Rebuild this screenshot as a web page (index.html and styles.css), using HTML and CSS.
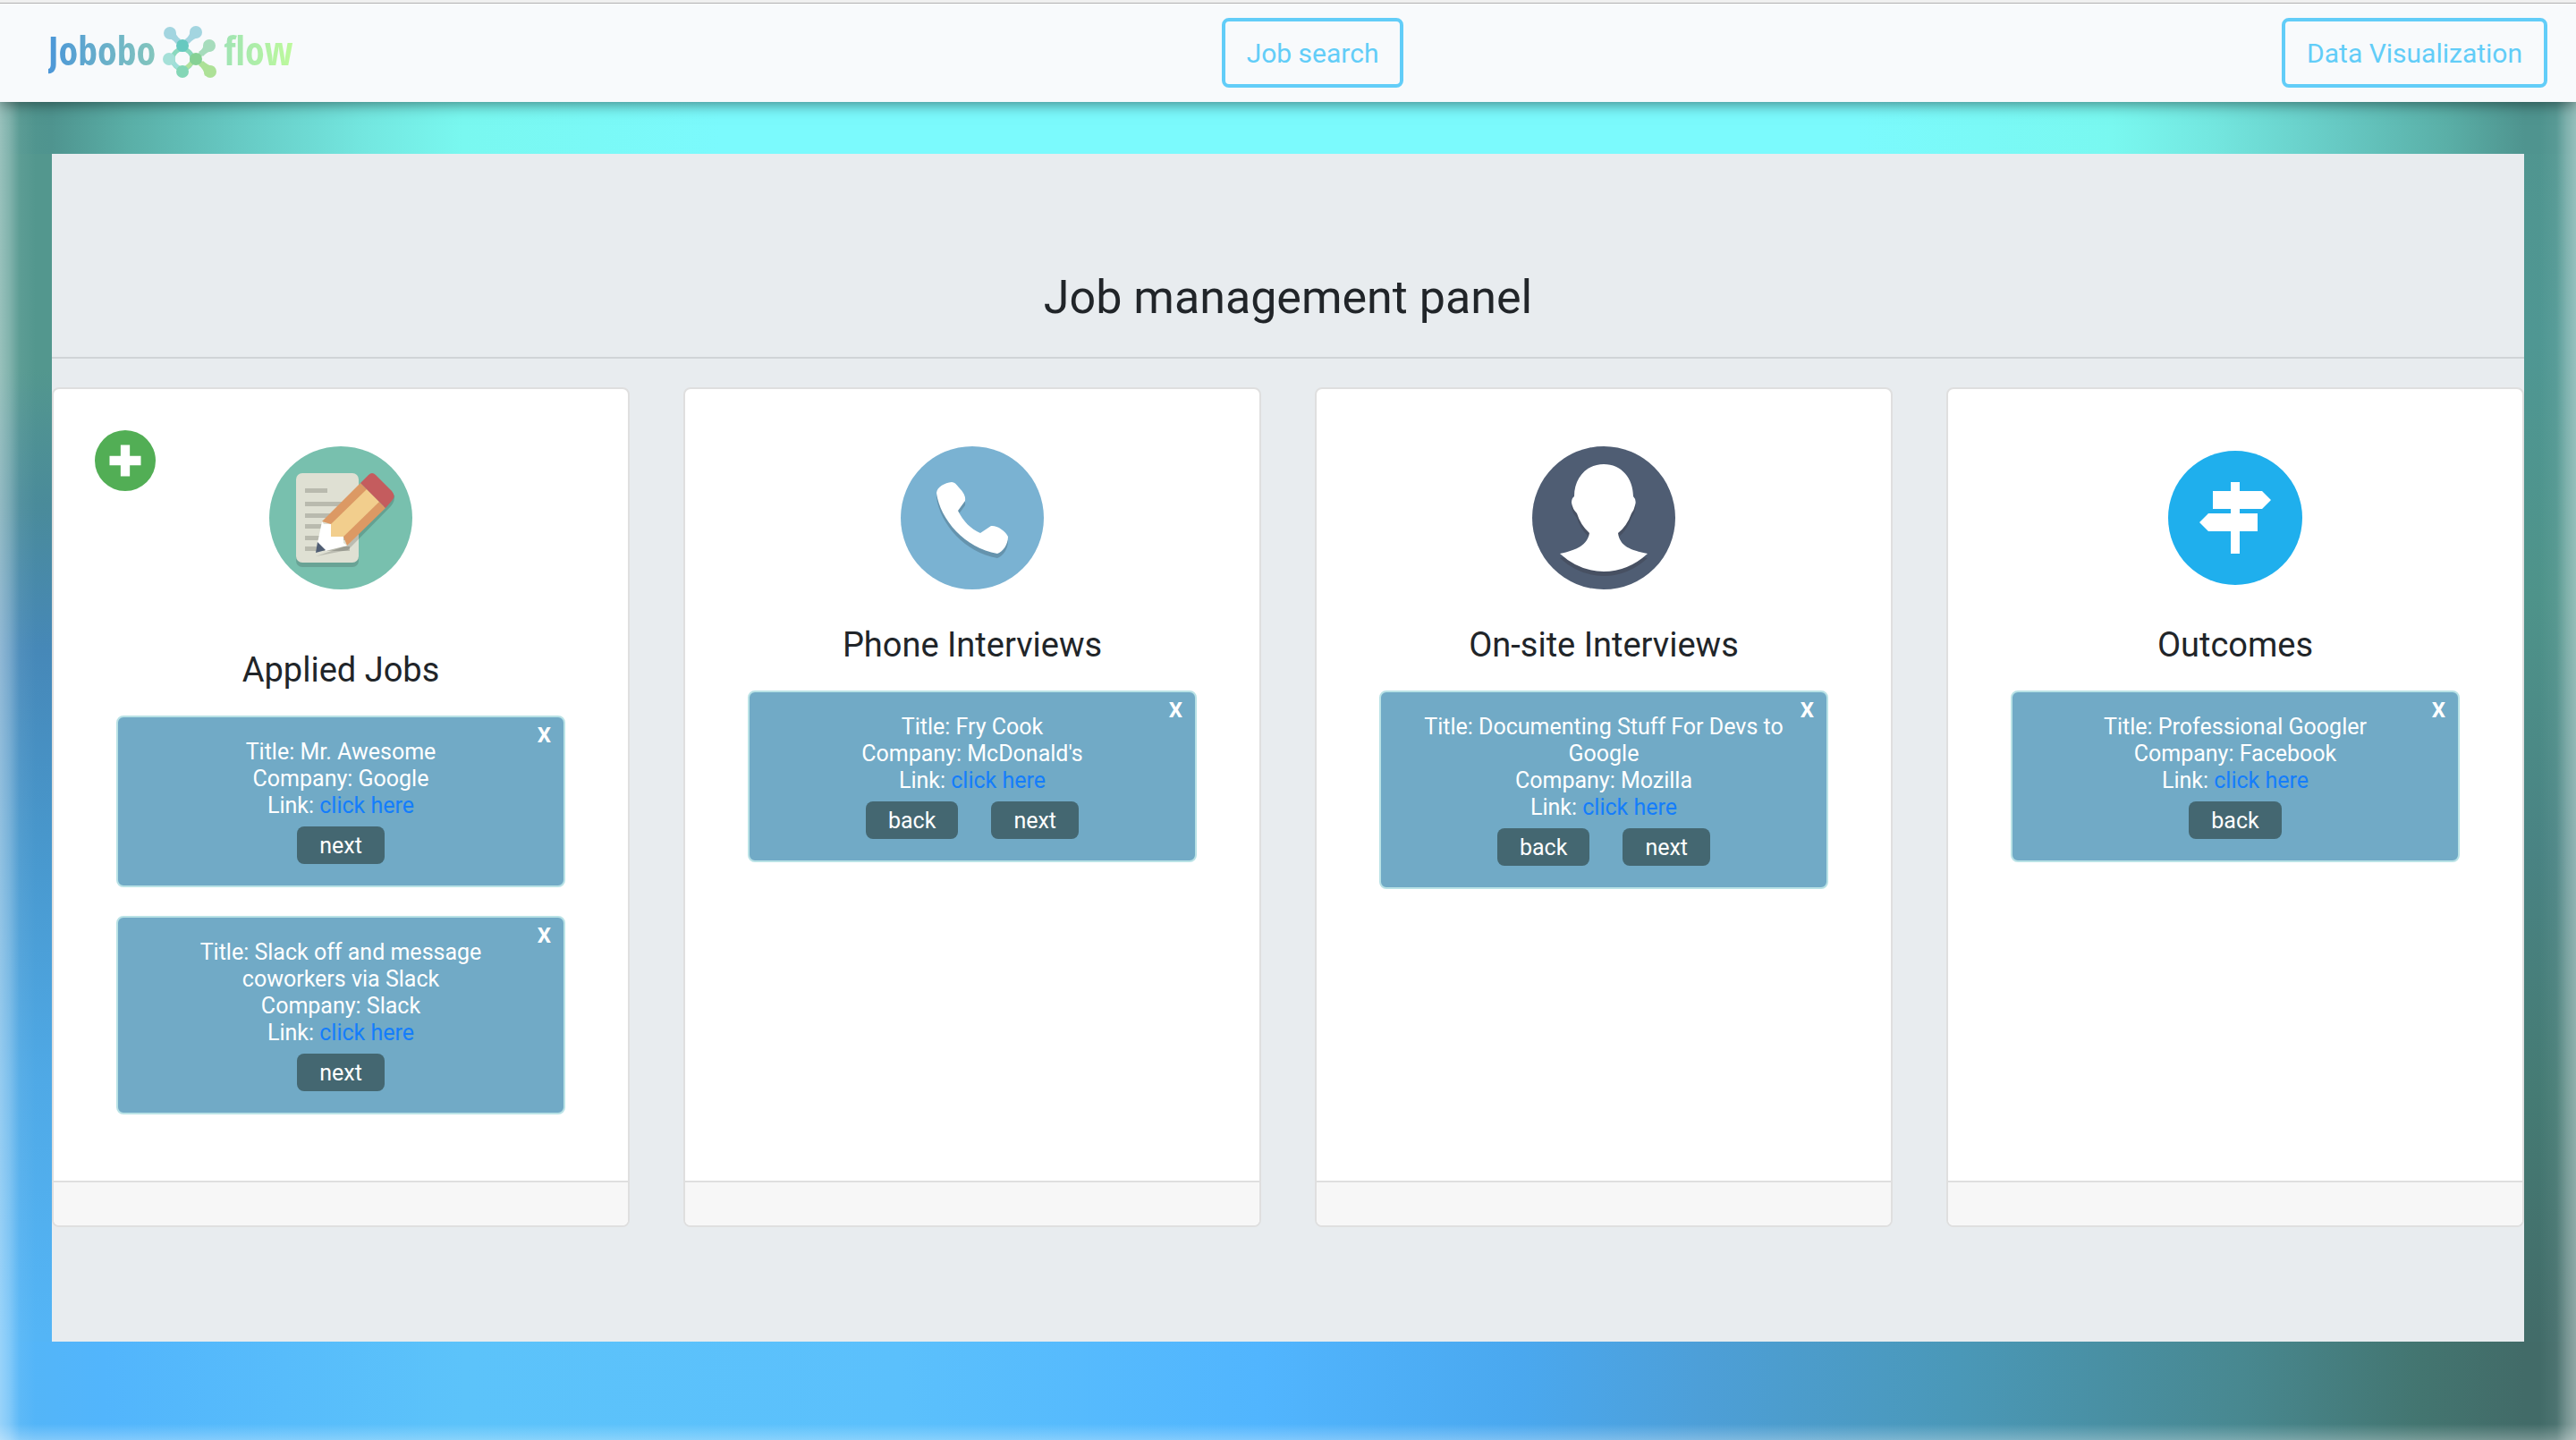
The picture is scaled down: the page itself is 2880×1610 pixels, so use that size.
FILE: index.html
```html
<!DOCTYPE html>
<html lang="en">
<head>
<meta charset="utf-8">
<title>Jobobo flow</title>
<link rel="stylesheet" href="styles.css">
</head>
<body>
<header class="navbar">
  <a class="brand" href="#" aria-label="Jobobo flow">
    <span class="brand-first">Jobobo</span>
    <svg class="brand-mark" viewBox="0 0 60 60" aria-hidden="true">
      <circle cx="22" cy="37" r="11" fill="none" stroke="#8ad9be" stroke-width="5"/>
      <g fill="none" stroke-width="5">
        <path stroke="#a3d8df" d="M8 8 22 22M37 7 22 22"/>
        <path stroke="#9fdfda" d="M8 38 22 51"/>
        <path stroke="#a5ddb8" d="M52 22 37 37"/>
        <path stroke="#b0e39c" d="M22 51 37 37 53 51"/>
      </g>
      <path fill="#a3d5e0" d="M3 13Q11 14 15 20L20 15Q14 11 13 3ZM42 12Q34 14 29 20L25 15Q31 11 31 3Z"/>
      <path fill="#a6dcbc" d="M57 27Q49 29 45 34L40 29Q46 26 46 18Z"/>
      <path fill="#ade197" d="M58 46Q50 44 45 39L40 44Q46 48 47 56Z"/>
      <circle cx="8" cy="8" r="7" fill="#a3d5e0"/><circle cx="37" cy="7" r="7" fill="#a3d5e0"/>
      <circle cx="7" cy="37" r="7" fill="#a5e0d8"/><circle cx="52" cy="22" r="7" fill="#a6dcbc"/>
      <circle cx="22" cy="22" r="7" fill="#66c9c0"/><circle cx="37" cy="37" r="7" fill="#86d195"/>
      <circle cx="22" cy="51" r="7" fill="#84d6b6"/><circle cx="53" cy="51" r="7" fill="#ade197"/>
    </svg>
    <span class="brand-last">flow</span>
  </a>
  <button class="nav-button" type="button">Job search</button>
  <button class="nav-button" type="button">Data Visualization</button>
</header>
<main class="page">
  <div class="panel">
    <h1 class="panel-title">Job management panel</h1>
    <div class="board">
      <section class="column">
        <div class="column-body column-body-tall">
          <button class="add" type="button" aria-label="Add job">
            <svg viewBox="0 0 66 66"><circle cx="33" cy="33" r="33" fill="#52ae55"/><path d="M28 16h10v12h12v10H38v12H28V38H16V28h12z" fill="#fff"/></svg>
          </button>
          <svg class="icon" viewBox="0 0 160 160" aria-hidden="true">
            <circle cx="80" cy="80" r="80" fill="#78c0ae"/>
            <rect x="30" y="35" width="70" height="100" rx="7" fill="#69a395"/>
            <rect x="30" y="30" width="70" height="100" rx="7" fill="#dfe0d3"/>
            <path d="M40 47h25v5H40zM40 62h50v5H40zM40 75h50v5H40zM40 87h50v5H40zM40 100h50v5H40zM40 112h50v5H40z" fill="#b9baae"/>
            <path d="M52 123 88 116 136 67Q141 61 140 54L87 111Z" fill="#000" fill-opacity=".16"/>
            <path d="M59 84 102 41 130 69 87 111 83 101 69 101 69 87Z" fill="#dc9964"/>
            <path d="M69 87 109 48 123 62 83 101 69 101Z" fill="#f2ce8d"/>
            <path d="M102 41 111 32Q115 28 119 32L137 50Q142 56 137 61L130 69Z" fill="#c45c5e"/>
            <path d="M59 84 61 87H69V101H83V108L87 111 63 117 54 108Z" fill="#fff"/>
            <path d="M54 107 63 116 52 119Z" fill="#4f5d73"/>
          </svg>
          <h2 class="column-title">Applied Jobs</h2>
          <article class="job">
            <button class="close" type="button" aria-label="Remove">X</button>
            <p>Title: Mr. Awesome</p><p>Company: Google</p><p>Link: <a href="#">click here</a></p>
            <div class="actions"><button class="step" type="button">next</button></div>
          </article>
          <article class="job">
            <button class="close" type="button" aria-label="Remove">X</button>
            <p>Title: Slack off and message coworkers via Slack</p><p>Company: Slack</p><p>Link: <a href="#">click here</a></p>
            <div class="actions"><button class="step" type="button">next</button></div>
          </article>
        </div>
        <div class="column-footer"></div>
      </section>
      <section class="column">
        <div class="column-body">
          <svg class="icon" viewBox="0 0 160 160" aria-hidden="true">
            <circle cx="80" cy="80" r="80" fill="#7ab2d2"/>
            <path d="M40 52C41 45 49 41 57 40C60 40 62 42 65 46C70 51 73 56 72 61L64 72C70 84 78 92 89 97L101 89C107 88 117 94 120 101C120 110 114 118 108 120C72 114 44 82 40 52Z" fill="#6593ad" transform="translate(0 5)"/>
            <path d="M40 52C41 45 49 41 57 40C60 40 62 42 65 46C70 51 73 56 72 61L64 72C70 84 78 92 89 97L101 89C107 88 117 94 120 101C120 110 114 118 108 120C72 114 44 82 40 52Z" fill="#fff"/>
          </svg>
          <h2 class="column-title">Phone Interviews</h2>
          <article class="job">
            <button class="close" type="button" aria-label="Remove">X</button>
            <p>Title: Fry Cook</p><p>Company: McDonald's</p><p>Link: <a href="#">click here</a></p>
            <div class="actions"><button class="step" type="button">back</button><button class="step" type="button">next</button></div>
          </article>
        </div>
        <div class="column-footer"></div>
      </section>
      <section class="column">
        <div class="column-body">
          <svg class="icon" viewBox="0 0 160 160" aria-hidden="true">
            <circle cx="80" cy="80" r="80" fill="#4f5d73"/>
            <path d="M47 56C47 36 60 20 80 20S113 36 113 56Q117 60 115 66Q114 71 111 75Q106 89 96 97C98 112 110 116 129 120Q107 140 80 140T31 120C50 116 62 110 64 97Q54 88 50 75Q45 70 44 63Q44 58 47 56Z" fill="#475062" transform="translate(0 5)"/>
            <path d="M47 56C47 36 60 20 80 20S113 36 113 56Q117 60 115 66Q114 71 111 75Q106 89 96 97C98 112 110 116 129 120Q107 140 80 140T31 120C50 116 62 110 64 97Q54 88 50 75Q45 70 44 63Q44 58 47 56Z" fill="#fff"/>
          </svg>
          <h2 class="column-title">On-site Interviews</h2>
          <article class="job">
            <button class="close" type="button" aria-label="Remove">X</button>
            <p>Title: Documenting Stuff For Devs to Google</p><p>Company: Mozilla</p><p>Link: <a href="#">click here</a></p>
            <div class="actions"><button class="step" type="button">back</button><button class="step" type="button">next</button></div>
          </article>
        </div>
        <div class="column-footer"></div>
      </section>
      <section class="column">
        <div class="column-body">
          <svg class="icon" viewBox="0 0 160 160" aria-hidden="true">
            <circle cx="80" cy="80" r="75" fill="#1fafed"/>
            <path d="M75 40H85V50H110L120 60 110 70H85V75H105V95H85V120H75V95H50L40 85 50 75H75V70H55V50H75Z" fill="#fff"/>
          </svg>
          <h2 class="column-title">Outcomes</h2>
          <article class="job">
            <button class="close" type="button" aria-label="Remove">X</button>
            <p>Title: Professional Googler</p><p>Company: Facebook</p><p>Link: <a href="#">click here</a></p>
            <div class="actions"><button class="step" type="button">back</button></div>
          </article>
        </div>
        <div class="column-footer"></div>
      </section>
    </div>
  </div>
</main>
</body>
</html>
```
FILE: styles.css
```css
* { box-sizing: border-box; }
body {
  margin: 0;
  min-height: 100vh;
  display: flex;
  flex-direction: column;
  font-family: Roboto, sans-serif;
  color: #212529;
}
button { font-family: inherit; cursor: pointer; }
p, h1, h2 { margin: 0; font-weight: 400; }

.navbar {
  position: relative;
  display: flex;
  align-items: center;
  justify-content: space-between;
  height: 114px;
  padding: 4px 32px 0;
  background: linear-gradient(#f0f0f0 3px, #b2b2b2 3px, #b2b2b2 4px, #f8fafc 4px);
  box-shadow: 0 2px 16px rgba(0, 0, 0, .5);
}
.brand {
  display: flex;
  align-items: center;
  gap: 8px;
  width: 352px;
  padding-left: 22px;
  font: 700 44px/56px "Open Sans Condensed", "Roboto Condensed", "Liberation Sans Narrow", Roboto, sans-serif;
  text-decoration: none;
  color: transparent;
}
.brand-first, .brand-last { padding-bottom: 6px; background-clip: text; }
.brand-first { background-image: linear-gradient(90deg, #4c97d8, #84c6bd); }
.brand-last { background-image: linear-gradient(90deg, #a0e4b4, #bdf99c); }
.brand-mark { width: 60px; height: 60px; }
.nav-button {
  height: 78px;
  padding: 0 24px;
  border: 4px solid #62cdf8;
  border-radius: 8px;
  background: transparent;
  color: #62cdf8;
  font-size: 30px;
}

/* Blurred backdrop: pale window edges over a strip above, a strip below and one column per side */
.page {
  flex: 1;
  padding: 58px 58px 112px;
  background:
    linear-gradient(90deg, rgba(255, 255, 255, .4), rgba(255, 255, 255, .28) 10px, rgba(255, 255, 255, .06) 22px, transparent 40px calc(100% - 40px), rgba(255, 255, 255, .06) calc(100% - 22px), rgba(255, 255, 255, .28) calc(100% - 10px), rgba(255, 255, 255, .4)),
    linear-gradient(0deg, rgba(255, 255, 255, .3), transparent 20px),
    linear-gradient(90deg, #53978e 0, #4f948f 2%, #5aafa7 5%, #66c8c2 9%, #73e6df 14%, #79f8f0 18%, #7bfafd 28% 72%, #79f8f0 82%, #73e6df 86%, #66c8c2 91%, #5aafa7 95%, #4f948f 98%) top / 100% 58px no-repeat,
    linear-gradient(90deg, #54b5f6 0, #52b5fc 4%, #5cc3fa 18%, #5bc0fc 35%, #51b5fe 49%, #4aa8ef 59%, #4d9fd8 66%, #4a98b8 76%, #488890 87%, #437570 94%, #426b68 98%) bottom / 100% 112px no-repeat,
    linear-gradient(#53978e 20%, #4a8b9a 30%, #4688b8 41%, #4897cc 55%, #4fa9e6 73%, #54b5f6 92%) left / 50% 100% no-repeat,
    linear-gradient(#50958f, #4f9793 18%, #4e938a 37%, #498383 56%, #457b74 74%, #426c69 92%) right / 50% 100% no-repeat;
}
.panel { padding: 124px 0 128px; background: #e8ecef; }
.panel-title {
  padding-bottom: 30px;
  border-bottom: 2px solid #d0d4d7;
  font-size: 52px;
  line-height: 73px;
  text-align: center;
}
.board {
  display: grid;
  grid-template-columns: repeat(4, 1fr);
  gap: 60px;
  padding-top: 32px;
}
.column {
  display: flex;
  flex-direction: column;
  border: 2px solid #dfdfdf;
  border-radius: 8px;
  background: #fff;
  text-align: center;
}
.column-body {
  position: relative;
  flex: 1;
  padding: 64px 70px 74px;
}
.column-footer { height: 50px; border-top: 2px solid #dfdfdf; border-radius: 0 0 6px 6px; background: #f7f7f7; }
.icon { display: block; width: 160px; height: 160px; margin: 0 auto 37px; }
.column-body-tall .icon { margin-bottom: 65px; }
.add {
  position: absolute;
  top: 46px;
  left: 46px;
  width: 68px;
  height: 68px;
  padding: 0;
  border: 0;
  background: none;
}
.add svg { display: block; width: 100%; height: 100%; }
.column-title { margin-bottom: 26px; font-size: 38px; line-height: 50px; }
.job {
  position: relative;
  padding: 24px 40px;
  border: 2px solid #b9e2e6;
  border-radius: 8px;
  background: #71aac6;
  color: #fff;
  font-size: 25px;
  line-height: 30px;
}
.job + .job { margin-top: 32px; }
.job a { color: #147dfb; text-decoration: none; }
.close {
  position: absolute;
  top: 6px;
  right: 12px;
  padding: 0 2px;
  border: 0;
  background: none;
  color: #fff;
  font-size: 24px;
  font-weight: 700;
  line-height: 28px;
}
.actions { display: flex; justify-content: center; gap: 37px; padding-top: 8px; }
.step {
  height: 42px;
  padding: 0 25px;
  border: 0;
  border-radius: 8px;
  background: #446771;
  color: #fff;
  font-size: 25px;
}
```
